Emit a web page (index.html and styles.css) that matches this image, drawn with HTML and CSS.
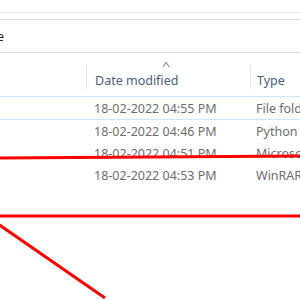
FILE: index.html
```html
<!DOCTYPE html>
<html>
<head>
<meta charset="utf-8">
<link rel="stylesheet" href="styles.css">
</head>
<body>
<div class="window">
  <div class="topline"></div>
  <div class="address"><span class="addr-text">e</span></div>
  <div class="list">
    <div class="header">
      <div class="col c-name"></div>
      <div class="col c-date"><span class="sort">^</span>Date modified</div>
      <div class="col c-type">Type</div>
    </div>
    <div class="row focus">
      <div class="col c-name"></div>
      <div class="col c-date">18-02-2022 04:55 PM</div>
      <div class="col c-type">File folder</div>
    </div>
    <div class="row">
      <div class="col c-name"></div>
      <div class="col c-date">18-02-2022 04:46 PM</div>
      <div class="col c-type">Python File</div>
    </div>
    <div class="row">
      <div class="col c-name"></div>
      <div class="col c-date">18-02-2022 04:51 PM</div>
      <div class="col c-type">Microsoft Word</div>
    </div>
    <div class="row">
      <div class="col c-name"></div>
      <div class="col c-date">18-02-2022 04:53 PM</div>
      <div class="col c-type">WinRAR archive</div>
    </div>
  </div>
  <svg class="annot" width="300" height="300" viewBox="0 0 300 300">
    <line x1="-2" y1="158" x2="302" y2="156" stroke="#ff0000" stroke-width="3"/>
    <line x1="-2" y1="216" x2="302" y2="216" stroke="#ff0000" stroke-width="3"/>
    <line x1="-2" y1="224" x2="105" y2="298" stroke="#ff0000" stroke-width="3"/>
  </svg>
</div>
</body>
</html>
```

FILE: styles.css
```css
html, body {
  margin: 0;
  padding: 0;
  background: #ffffff;
}
.window {
  position: relative;
  width: 300px;
  height: 300px;
  overflow: hidden;
  font-family: "Noto Sans", "Open Sans", sans-serif;
  font-size: 12.5px;
}
.topline {
  height: 12px;
  border-bottom: 1px solid #e3e3e3;
}
.address {
  margin-top: 6px;
  height: 32px;
  border-top: 1px solid #d9d9d9;
  border-bottom: 1px solid #d9d9d9;
  display: flex;
  align-items: center;
  color: #1e1e1e;
  overflow: hidden;
}
.addr-text {
  margin-left: -3px;
}
.list {
  margin-top: 8px;
}
.header {
  display: flex;
  height: 35px;
  border-bottom: 1px solid #cce8ff;
  align-items: stretch;
}
.header .col {
  display: flex;
  align-items: center;
  color: #4c607a;
  position: relative;
}
.c-name { width: 86px; flex: none; }
.c-date { width: 155px; flex: none; padding-left: 8px; }
.c-type { flex: none; width: 160px; padding-left: 7px; white-space: nowrap; }
.header .c-date, .header .c-type {
  border-left: 1px solid #e5e5e5;
  margin-top: 4px;
  margin-bottom: 7px;
  padding-top: 7px;
}
.header .c-type { padding-left: 6px; }
.sort {
  position: absolute;
  left: 76px;
  top: -5px;
  font-size: 11px;
  line-height: 11px;
  color: #6d7b8d;
  transform: scaleX(1.3);
}
.row {
  display: flex;
  height: 22px;
  align-items: center;
  color: #6d6d6d;
  white-space: nowrap;
}
.row.focus {
  height: 22px;
  border-bottom: 1px solid #cce8ff;
}
.annot {
  position: absolute;
  left: 0;
  top: 0;
}
```
